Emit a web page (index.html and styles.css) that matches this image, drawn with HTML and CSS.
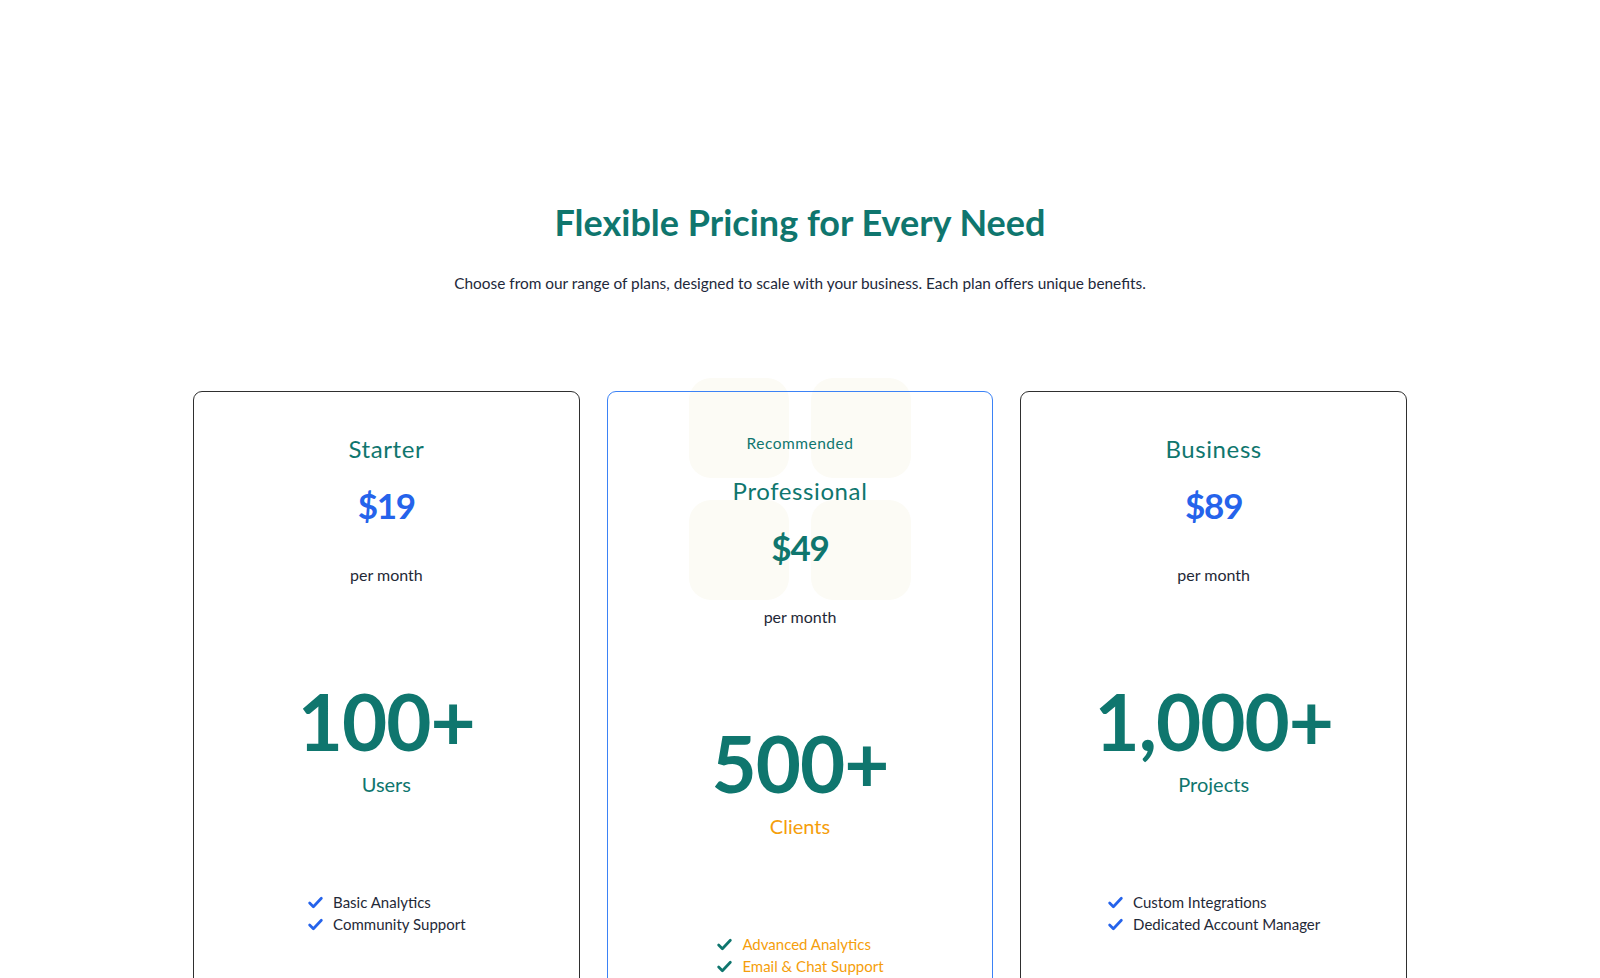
FILE: index.html
```html
<!DOCTYPE html>
<html lang="en">
<head>
<meta charset="utf-8">
<title>Pricing</title>
<link rel="stylesheet" href="styles.css">
</head>
<body>
<section class="pricing">
  <h1 class="title">Flexible Pricing for Every Need</h1>
  <p class="subtitle">Choose from our range of plans, designed to scale with your business. Each plan offers unique benefits.</p>
  <div class="cards">
    <div class="card">
      <h2 class="plan">Starter</h2>
      <div class="price">$19</div>
      <div class="period">per month</div>
      <div class="big">100+</div>
      <div class="label">Users</div>
      <ul class="features">
        <li><svg class="check" viewBox="0 0 16 16"><path d="M2.5 8.5l3.5 3.5 7.5-8"/></svg>Basic Analytics</li>
        <li><svg class="check" viewBox="0 0 16 16"><path d="M2.5 8.5l3.5 3.5 7.5-8"/></svg>Community Support</li>
      </ul>
    </div>
    <div class="card card-featured">
      <div class="deco">
        <span></span><span></span><span></span><span></span>
      </div>
      <div class="badge">Recommended</div>
      <h2 class="plan">Professional</h2>
      <div class="price price-teal">$49</div>
      <div class="period">per month</div>
      <div class="big">500+</div>
      <div class="label label-orange">Clients</div>
      <ul class="features features-orange">
        <li><svg class="check" viewBox="0 0 16 16"><path d="M2.5 8.5l3.5 3.5 7.5-8"/></svg>Advanced Analytics</li>
        <li><svg class="check" viewBox="0 0 16 16"><path d="M2.5 8.5l3.5 3.5 7.5-8"/></svg>Email &amp; Chat Support</li>
      </ul>
    </div>
    <div class="card">
      <h2 class="plan">Business</h2>
      <div class="price">$89</div>
      <div class="period">per month</div>
      <div class="big">1,000+</div>
      <div class="label">Projects</div>
      <ul class="features">
        <li><svg class="check" viewBox="0 0 16 16"><path d="M2.5 8.5l3.5 3.5 7.5-8"/></svg>Custom Integrations</li>
        <li><svg class="check" viewBox="0 0 16 16"><path d="M2.5 8.5l3.5 3.5 7.5-8"/></svg>Dedicated Account Manager</li>
      </ul>
    </div>
  </div>
</section>
</body>
</html>
```

FILE: styles.css
```css
html {
  margin: 0;
  padding: 0;
  background: #ffffff;
}
body {
  margin: 0;
  padding: 0;
  font-family: "Lato", "Inter", "Liberation Sans", sans-serif;
  color: #1f2937;
  overflow: hidden;
  height: 978px;
}
.pricing {
  padding-top: 202px;
  display: flex;
  flex-direction: column;
  align-items: center;
}
.title {
  margin: 0;
  font-size: 36px;
  line-height: 40px;
  font-weight: 700;
  color: #0f766e;
}
.subtitle {
  margin: 29px 0 0;
  font-size: 15.4px;
  line-height: 24px;
  color: #1e293b;
}
.cards {
  margin-top: 96px;
  width: 1214px;
  display: grid;
  grid-template-columns: repeat(3, 1fr);
  gap: 27px;
}
.card {
  position: relative;
  border: 1px solid #2f2f2f;
  border-radius: 9px;
  padding: 41px 24px 60px;
  display: flex;
  flex-direction: column;
  align-items: center;
  min-height: 640px;
}
.card-featured {
  border-color: #3b82f6;
}
.deco {
  position: absolute;
  z-index: -1;
  top: -14px;
  left: 50%;
  transform: translateX(-50%);
  display: grid;
  grid-template-columns: 100px 100px;
  grid-auto-rows: 100px;
  gap: 22px;
}
.deco span {
  background: #fcfbf5;
  border-radius: 22px;
}
.badge {
  font-size: 15.5px;
  line-height: 20px;
  letter-spacing: 0.5px;
  color: #0f766e;
  margin-bottom: 22px;
}
.plan {
  margin: 0;
  font-size: 24px;
  line-height: 32px;
  font-weight: 400;
  letter-spacing: 0.6px;
  color: #0f766e;
}
.price {
  margin-top: 20px;
  font-size: 35px;
  line-height: 40px;
  font-weight: 700;
  letter-spacing: -1.2px;
  color: #2563eb;
}
.price-teal {
  color: #0f766e;
}
.period {
  margin-top: 38px;
  font-size: 16px;
  line-height: 24px;
  color: #1f2937;
}
.big {
  margin-top: 96px;
  font-size: 78px;
  line-height: 76px;
  font-weight: 700;
  color: #0f766e;
  letter-spacing: -1px;
}
.label {
  margin-top: 11px;
  font-size: 20px;
  line-height: 28px;
  color: #0f766e;
}
.label-orange {
  color: #f59e0b;
}
.features {
  list-style: none;
  margin: 94px 0 0;
  padding: 0;
  font-size: 15px;
  line-height: 21.5px;
  color: #1f2937;
}
.features li {
  display: flex;
  align-items: center;
}
.check {
  width: 17px;
  height: 17px;
  margin-right: 9px;
  fill: none;
  stroke: #2563eb;
  stroke-width: 2.6;
  stroke-linecap: round;
  stroke-linejoin: round;
}
.features-orange {
  color: #f59e0b;
}
.features-orange .check {
  stroke: #0f766e;
}
```
